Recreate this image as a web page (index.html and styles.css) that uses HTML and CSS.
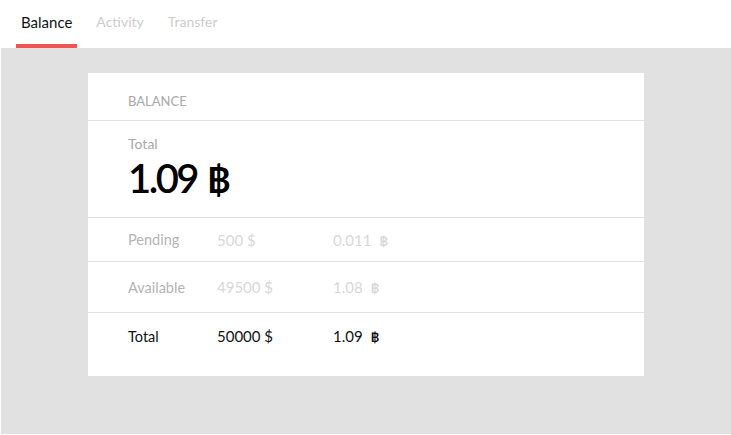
FILE: index.html
```html
<!DOCTYPE html>
<html lang="en">

<head>
    <meta charset="UTF-8">
    <meta name="viewport" content="width=device-width, initial-scale=1.0">
    <title>Wallet</title>
    <link rel="stylesheet" href="styles.css">
</head>

<body>
    <nav class="tabs">
        <a class="tab active">Balance</a>
        <a class="tab">Activity</a>
        <a class="tab">Transfer</a>
    </nav>

    <main class="main">
        <div class="card">
            <div class="card-header">BALANCE</div>

            <div class="summary">
                <div class="summary-label">Total</div>
                <div class="summary-value">1.09 <span class="btc">฿</span></div>
            </div>

            <div class="row row-pending muted">
                <span class="label">Pending</span>
                <span>500 $</span>
                <span>0.011 <span class="btc">฿</span></span>
            </div>
            <div class="row row-available muted">
                <span class="label">Available</span>
                <span>49500 $</span>
                <span>1.08 <span class="btc">฿</span></span>
            </div>
            <div class="row row-total">
                <span class="label">Total</span>
                <span>50000 $</span>
                <span>1.09 <span class="btc">฿</span></span>
            </div>
        </div>
    </main>
</body>

</html>
```

FILE: styles.css
```css
body {
    font-family: Lato, "Open Sans", sans-serif;
    background-color: #fff;
    color: #111;
    margin: 0;
}

.tabs {
    display: flex;
    gap: 14px;
    height: 48px;
    padding-left: 16px;
    box-sizing: border-box;
}

.tab {
    display: block;
    padding: 14px 5px 0;
    font-size: 14px;
    line-height: 16px;
    color: #cdcdcd;
    cursor: pointer;
}

.tab.active {
    font-size: 15px;
    color: #111;
    border-bottom: 4px solid #f05454;
}

.main {
    background: #e1e1e1;
    margin-left: 1px;
    height: 386px;
    padding-top: 25px;
    box-sizing: border-box;
}

.card {
    width: 556px;
    margin: 0 auto;
    background: #fff;
    padding-bottom: 17px;
}

.card-header {
    padding: 20px 40px 11px;
    font-size: 13px;
    line-height: 16px;
    color: #a8a8a8;
    border-bottom: 1px solid #e2e2e2;
}

.summary {
    height: 97px;
    box-sizing: border-box;
    padding: 15px 40px 0;
    border-bottom: 1px solid #e2e2e2;
}

.summary-label {
    font-size: 14px;
    line-height: 16px;
    color: #a8a8a8;
}

.summary-value {
    font-size: 40px;
    line-height: 44px;
    font-weight: 600;
    letter-spacing: -2.5px;
    color: #000;
    margin-top: 4px;
}

.summary-value .btc {
    font-size: 36px;
    letter-spacing: 0;
    margin-left: 2px;
}

.row {
    display: grid;
    grid-template-columns: 89px 116px 1fr;
    align-items: center;
    padding: 0 40px;
    font-size: 15px;
    box-sizing: border-box;
}

.row .label {
    font-size: 14.5px;
}

.row-pending {
    height: 44px;
    border-bottom: 1px solid #e2e2e2;
}

.row-available {
    height: 51px;
    border-bottom: 1px solid #e2e2e2;
}

.row-total {
    height: 46px;
}

.muted {
    color: #d8d8d8;
}

.muted .label {
    color: #b4b4b4;
}

.btc {
    font-size: 13px;
    font-weight: 700;
    margin-left: 4px;
}
```
